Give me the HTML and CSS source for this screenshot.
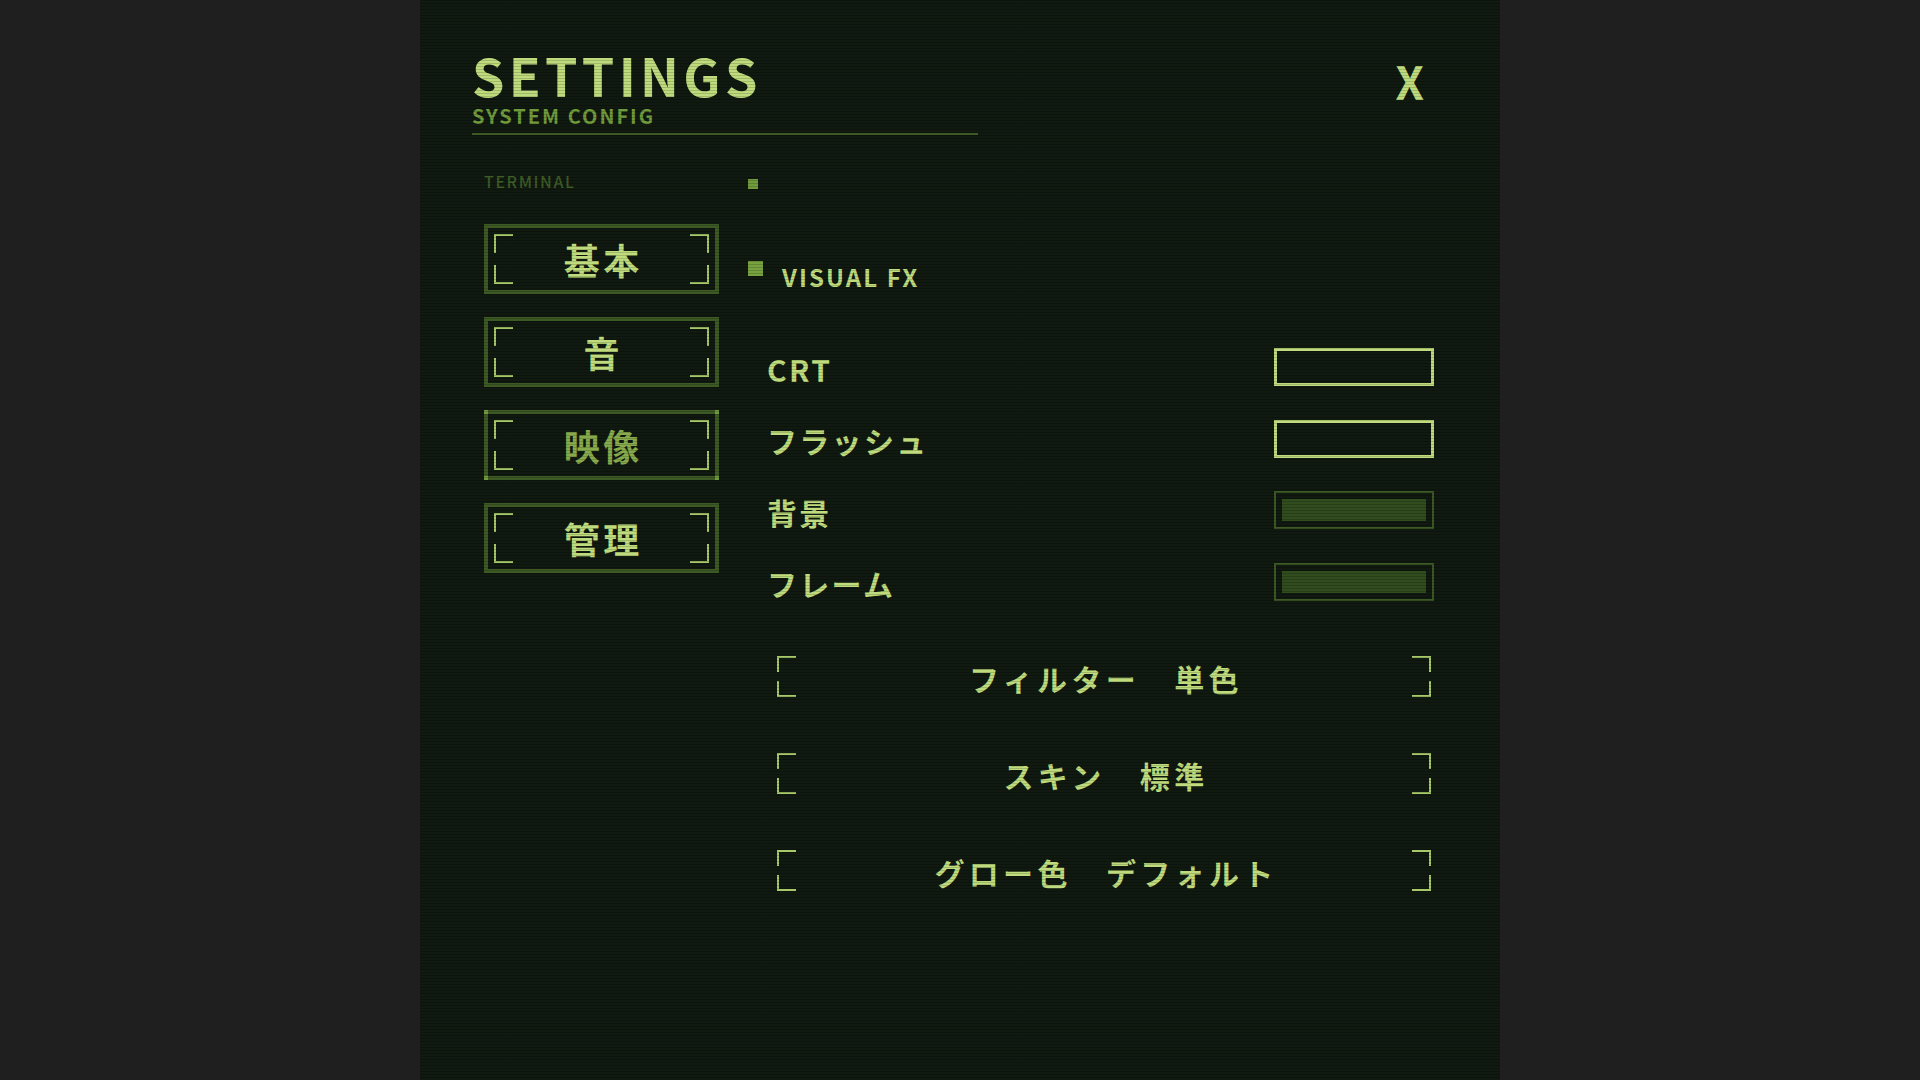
FILE: index.html
```html
<!DOCTYPE html>
<html lang="ja">
<head>
<meta charset="utf-8">
<title>Settings</title>
<link rel="stylesheet" href="styles.css">
</head>
<body>
<div class="panel">
  <header class="head">
    <div class="title-block">
      <h1 class="title">SETTINGS</h1>
      <div class="subtitle">SYSTEM CONFIG</div>
    </div>
    <button class="close" type="button">X</button>
  </header>
  <div class="body">
    <nav class="nav">
      <div class="nav-label">TERMINAL</div>
      <ul class="nav-list">
        <li class="nav-btn">基本</li>
        <li class="nav-btn">音</li>
        <li class="nav-btn active">映像</li>
        <li class="nav-btn">管理</li>
      </ul>
    </nav>
    <section class="content">
      <div class="dot-sm"></div>
      <div class="section-head">
        <span class="sq"></span>
        <h2 class="section-title">VISUAL FX</h2>
      </div>
      <div class="rows">
        <div class="row"><span class="label">CRT</span><span class="toggle"></span></div>
        <div class="row"><span class="label">フラッシュ</span><span class="toggle"></span></div>
        <div class="row"><span class="label">背景</span><span class="toggle on"></span></div>
        <div class="row"><span class="label">フレーム</span><span class="toggle on"></span></div>
      </div>
      <div class="selects">
        <div class="select"><span class="val">フィルター　単色</span></div>
        <div class="select"><span class="val">スキン　標準</span></div>
        <div class="select"><span class="val">グロー色　デフォルト</span></div>
      </div>
    </section>
  </div>
</div>
</body>
</html>
```
FILE: styles.css
```css
:root {
  --outer: #1f1f1f;
  --panel: #0e170e;
  --bright: #bedb7c;
  --bracket: #a6c867;
  --olive: #6f9a3a;
  --dim: #3b5822;
  --fill: #2f4a1b;
}

* { box-sizing: border-box; }

html, body {
  margin: 0;
  padding: 0;
  background: var(--outer);
  font-family: "Noto Sans CJK JP", "Noto Sans", sans-serif;
}

.panel {
  position: relative;
  width: 1080px;
  height: 1080px;
  margin: 0 auto;
  background: var(--panel);
  padding: 49px 66px 0 52px;
  overflow: hidden;
}

.panel::after {
  content: "";
  position: absolute;
  inset: 0;
  pointer-events: none;
  background: repeating-linear-gradient(to bottom, rgba(0, 0, 0, 0.16) 0 1px, rgba(255, 255, 255, 0.01) 1px 3px);
}

.head {
  display: flex;
  justify-content: space-between;
  align-items: flex-start;
}

.title-block {
  width: 506px;
  padding-bottom: 7px;
  border-bottom: 2px solid var(--dim);
}

.title {
  margin: 0;
  font-weight: 700;
  font-size: 52px;
  line-height: 1;
  letter-spacing: 4.3px;
  color: var(--bright);
}

.subtitle {
  margin-top: 5px;
  font-weight: 700;
  font-size: 20px;
  line-height: 1;
  letter-spacing: 2px;
  color: var(--olive);
}

.close {
  margin-top: 8px;
  padding: 0 10px;
  border: 0;
  background: none;
  font-family: inherit;
  font-weight: 700;
  font-size: 46px;
  line-height: 1;
  color: var(--bright);
}

.body {
  display: flex;
  margin-top: 38px;
  padding-left: 12px;
}

.nav {
  flex: none;
  width: 235px;
}

.nav-label {
  font-weight: 500;
  font-size: 16px;
  line-height: 1;
  letter-spacing: 1.6px;
  color: #3d5b24;
  margin-bottom: 35px;
}

.nav-list {
  list-style: none;
  margin: 0;
  padding: 0;
  display: flex;
  flex-direction: column;
  gap: 23px;
}

.nav-btn {
  --c: var(--bracket);
  position: relative;
  height: 70px;
  border: 4px solid var(--dim);
  display: flex;
  align-items: center;
  justify-content: center;
  padding-left: 0.1em;
  font-weight: 700;
  font-size: 36px;
  line-height: 1;
  letter-spacing: 0.1em;
  color: var(--bright);
  background:
    linear-gradient(var(--c), var(--c)) left 6px top 6px / 19px 2px no-repeat,
    linear-gradient(var(--c), var(--c)) left 6px top 6px / 2px 19px no-repeat,
    linear-gradient(var(--c), var(--c)) right 6px top 6px / 19px 2px no-repeat,
    linear-gradient(var(--c), var(--c)) right 6px top 6px / 2px 19px no-repeat,
    linear-gradient(var(--c), var(--c)) left 6px bottom 6px / 19px 2px no-repeat,
    linear-gradient(var(--c), var(--c)) left 6px bottom 6px / 2px 19px no-repeat,
    linear-gradient(var(--c), var(--c)) right 6px bottom 6px / 19px 2px no-repeat,
    linear-gradient(var(--c), var(--c)) right 6px bottom 6px / 2px 19px no-repeat;
}

.nav-btn.active {
  color: #86a94a;
}

.nav-btn.active::after {
  content: "";
  position: absolute;
  inset: -4px;
  pointer-events: none;
  background:
    linear-gradient(var(--olive), var(--olive)) left top / 4px 4px no-repeat,
    linear-gradient(var(--olive), var(--olive)) right top / 4px 4px no-repeat,
    linear-gradient(var(--olive), var(--olive)) left bottom / 4px 4px no-repeat,
    linear-gradient(var(--olive), var(--olive)) right bottom / 4px 4px no-repeat;
}

.content {
  flex: 1;
  margin-left: 29px;
}

.dot-sm {
  width: 10px;
  height: 10px;
  margin-top: 6px;
  background: var(--olive);
}

.section-head {
  display: flex;
  align-items: flex-start;
  margin-top: 72px;
}

.sq {
  flex: none;
  width: 15px;
  height: 15px;
  background: #76a13e;
}

.section-title {
  margin: 4px 0 0 19px;
  font-weight: 700;
  font-size: 24px;
  line-height: 1;
  letter-spacing: 2.1px;
  color: var(--bright);
}

.rows {
  margin-top: 59px;
  padding-left: 19px;
  display: flex;
  flex-direction: column;
  gap: 33.5px;
}

.row {
  height: 38px;
  display: flex;
  align-items: center;
  justify-content: space-between;
}

.label {
  padding-top: 3px;
  font-weight: 700;
  font-size: 30px;
  line-height: 1;
  letter-spacing: 2.3px;
  color: var(--bright);
}

.toggle {
  width: 160px;
  height: 38px;
  border: 3px solid var(--bright);
}

.toggle.on {
  border: 2px solid var(--dim);
  padding: 6px;
  background: var(--fill) content-box;
}

.selects {
  margin-top: 55.5px;
  padding-left: 29px;
  padding-right: 3px;
  display: flex;
  flex-direction: column;
  gap: 56px;
}

.select {
  --c: var(--bracket);
  height: 41px;
  display: flex;
  align-items: center;
  justify-content: center;
  background:
    linear-gradient(var(--c), var(--c)) left top / 19px 2px no-repeat,
    linear-gradient(var(--c), var(--c)) left top / 2px 16px no-repeat,
    linear-gradient(var(--c), var(--c)) left bottom / 19px 2px no-repeat,
    linear-gradient(var(--c), var(--c)) left bottom / 2px 16px no-repeat,
    linear-gradient(var(--c), var(--c)) right top / 19px 2px no-repeat,
    linear-gradient(var(--c), var(--c)) right top / 2px 16px no-repeat,
    linear-gradient(var(--c), var(--c)) right bottom / 19px 2px no-repeat,
    linear-gradient(var(--c), var(--c)) right bottom / 2px 16px no-repeat;
}

.val {
  padding-top: 3px;
  padding-left: 4px;
  font-weight: 700;
  font-size: 30px;
  line-height: 1;
  letter-spacing: 4.3px;
  color: var(--bright);
}
```
